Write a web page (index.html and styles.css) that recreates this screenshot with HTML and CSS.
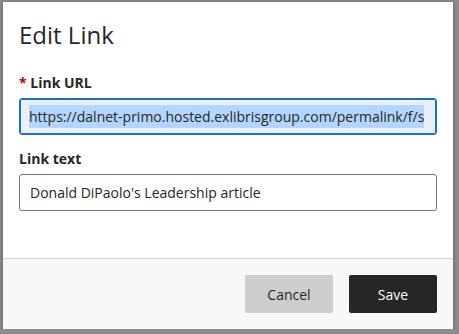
FILE: index.html
```html
<!DOCTYPE html>
<html lang="en">
<head>
    <meta charset="UTF-8">
    <title>Edit Link</title>
    <link rel="stylesheet" href="styles.css">
</head>
<body>
    <div class="dialog">
        <div class="dialog-body">
            <h1 class="dialog-title">Edit Link</h1>
            <label class="field-label"><span class="req">*</span> Link URL</label>
            <div class="field field-focus"><span class="sel">https://dalnet-primo.hosted.exlibrisgroup.com/permalink/f/s</span></div>
            <label class="field-label">Link text</label>
            <div class="field">Donald DiPaolo's Leadership article</div>
        </div>
        <div class="dialog-footer">
            <button class="btn btn-cancel">Cancel</button>
            <button class="btn btn-save">Save</button>
        </div>
    </div>
</body>
</html>
```

FILE: styles.css
```css
*{
    margin: 0;
    padding: 0;
    box-sizing: border-box;
}
body{
    background: #8c8c8c;
    font-family: "Open Sans", "Liberation Sans", sans-serif;
    color: #262626;
}
.dialog{
    width: 450px;
    margin: 2px 0 0 3px;
    background: #fff;
    box-shadow: 0 1px 4px rgba(0,0,0,0.35);
}
.dialog-body{
    padding: 15px 16px 33px;
}
.dialog-title{
    font-size: 24px;
    font-weight: 400;
    line-height: 36px;
    margin-bottom: 20px;
}
.field-label{
    display: block;
    font-size: 14px;
    font-weight: 700;
    line-height: 20px;
    margin-bottom: 5px;
}
.req{
    color: #c00;
}
.field{
    height: 37px;
    border: 1px solid #767676;
    border-radius: 3px;
    padding: 0 10px;
    font-size: 14px;
    line-height: 35px;
    white-space: nowrap;
    overflow: hidden;
    margin-bottom: 14px;
}
.field-focus{
    border-color: #1c6fc2;
    background: #e8f1fa;
    box-shadow: inset 0 0 0 1px #1c6fc2;
    padding: 0 9px;
}
.sel{
    background: #b4d5fd;
    padding: 2px 0;
}
.dialog-footer{
    background: #f8f8f8;
    border-top: 1px solid #cdcdcd;
    padding: 16px;
    display: flex;
    justify-content: flex-end;
    gap: 16px;
}
.btn{
    width: 88px;
    height: 38px;
    border: none;
    border-radius: 2px;
    font-family: inherit;
    font-size: 14px;
}
.btn-cancel{
    background: #cdcdcd;
    color: #262626;
}
.btn-save{
    background: #262626;
    color: #fff;
}
```
